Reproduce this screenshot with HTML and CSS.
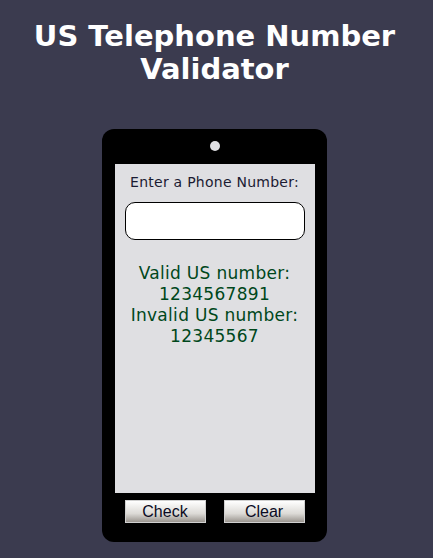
FILE: index.html
```html
<!DOCTYPE html>
<html>
<head>
<meta charset="utf-8">
<link rel="stylesheet" href="styles.css">
</head>
<body>
<h1 class="title">US Telephone Number Validator</h1>
<div class="phone">
  <div class="camera"></div>
  <div class="screen">
    <label class="label" for="user-input">Enter a Phone Number:</label>
    <input class="input" id="user-input" type="text">
    <div class="results">
      <p>Valid US number: 1234567891</p>
      <p>Invalid US number: 12345567</p>
    </div>
  </div>
  <div class="buttons">
    <button class="btn">Check</button>
    <button class="btn">Clear</button>
  </div>
</div>
</body>
</html>
```
FILE: styles.css
```css
html, body {
  margin: 0;
  padding: 0;
}
body {
  background: #3b3b4f;
  font-family: "DejaVu Sans", Verdana, sans-serif;
  height: 558px;
  overflow: hidden;
}
.title {
  color: #ffffff;
  text-align: center;
  font-size: 29px;
  line-height: 33px;
  margin: 20px 32px 0 28px;
  font-weight: bold;
}
.phone {
  width: 225px;
  height: 413px;
  box-sizing: border-box;
  margin: 43px auto 0;
  background: #000;
  border-radius: 12px;
  padding-top: 12px;
  display: flex;
  flex-direction: column;
  align-items: center;
  position: relative;
  left: -2px;
}
.camera {
  width: 10px;
  height: 10px;
  border-radius: 50%;
  background: #dfdfe2;
}
.screen {
  margin-top: 13px;
  width: 200px;
  height: 329px;
  background: #dfdfe2;
  display: flex;
  flex-direction: column;
  align-items: center;
}
.label {
  margin-top: 10px;
  font-size: 14px;
  letter-spacing: 0.25px;
  color: #1b1b32;
}
.input {
  margin-top: 12px;
  width: 180px;
  height: 38px;
  box-sizing: border-box;
  border: 1px solid #000;
  border-radius: 10px;
  background: #fff;
}
.results {
  margin-top: 23px;
  color: #00471b;
  font-size: 17px;
  letter-spacing: 0.3px;
  line-height: 21px;
  text-align: center;
}
.results p {
  margin: 0;
  padding: 0 8px;
}
.buttons {
  margin-top: 7px;
  width: 180px;
  display: flex;
  justify-content: space-between;
}
.btn {
  width: 81px;
  height: 23px;
  padding: 0;
  font-family: "Liberation Sans", Arial, sans-serif;
  font-size: 16px;
  color: #0a0a23;
  border: 1px solid #d0d0d0;
  background: linear-gradient(#ffffff, #dcdad6 60%, #9a958f);
  border-radius: 0;
}
```
